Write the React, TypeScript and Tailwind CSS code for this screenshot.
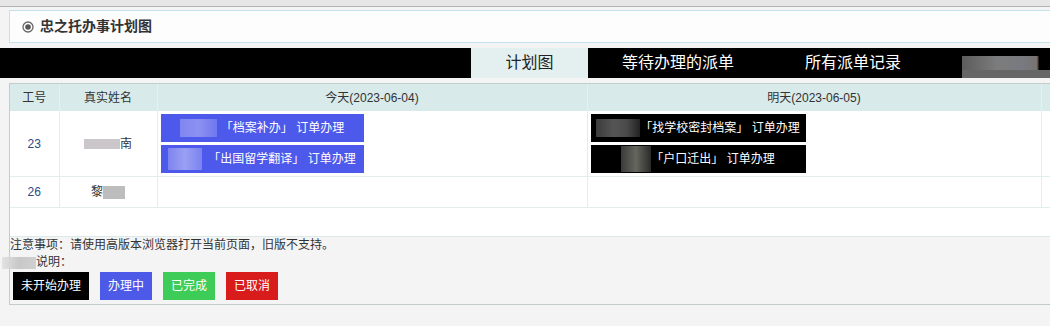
import React from 'react';

const FONT = '"Liberation Sans", "Noto Sans CJK SC", sans-serif';

function Blur({ className }: { className: string }) {
  return <span className={`inline-block align-middle ${className}`} />;
}

function TaskBox({ color, width, blur, children }: { color: string; width: string; blur: string; children: React.ReactNode }) {
  return (
    <div className={`${color} ${width} h-[28px] flex items-center justify-center text-white text-[12px] whitespace-nowrap`}>
      <Blur className={blur} />
      <span>{children}</span>
    </div>
  );
}

export default function App() {
  return (
    <div className="w-[1050px] h-[326px] bg-[#f4f4f4] overflow-hidden text-[#333]" style={{ fontFamily: FONT }}>
      {/* top strip */}
      <div className="h-[7px] bg-[#e6e6e6] border-b border-[#b4b4b4]" />

      {/* title */}
      <div className="mt-[3px] ml-[9px] h-[33px] bg-[#fdfdfd] border border-r-0 border-[#c3e2eb] flex items-center pl-[12px] gap-[6px]">
        <svg width="12" height="12" viewBox="0 0 12 12">
          <circle cx="6" cy="6" r="5" fill="none" stroke="#666" strokeWidth="1.3" />
          <circle cx="6" cy="6" r="2.8" fill="#555" />
        </svg>
        <span className="text-[14px] font-bold text-[#333]">忠之托办事计划图</span>
      </div>

      {/* nav */}
      <div className="mt-[5px] h-[30px] bg-black flex text-[16px]">
        <div className="w-[471px]" />
        <div className="w-[117px] bg-[#e4f0f0] text-[#222] flex items-center justify-center">计划图</div>
        <div className="w-[180px] text-white flex items-center justify-center">等待办理的派单</div>
        <div className="w-[170px] text-white flex items-center justify-center">所有派单记录</div>
        <div className="ml-[24px] flex-1 flex flex-col justify-end">
          <div className="h-[14px] bg-[linear-gradient(90deg,#5c5c5c,#7c7c7c_40%,#777a80_70%,#7a726e_85%,#000_88%)]" />
          <div className="h-[8px] bg-[#666]" />
        </div>
      </div>

      {/* main */}
      <div className="mt-[5px] ml-[9px] w-[1060px] border-l border-t border-b border-[#c3cccc]">
        <table className="table-fixed border-collapse text-[12px] bg-white" style={{ width: 1060 }}>
          <colgroup>
            <col style={{ width: 49 }} />
            <col style={{ width: 98 }} />
            <col style={{ width: 430 }} />
            <col style={{ width: 454 }} />
            <col />
          </colgroup>
          <thead>
            <tr className="h-[27px] bg-[#d8eaea] text-[#333]">
              <th className="font-normal border-r border-[#e6f2f2]">工号</th>
              <th className="font-normal border-r border-[#e6f2f2]">真实姓名</th>
              <th className="font-normal border-r border-[#e6f2f2]">今天(2023-06-04)</th>
              <th className="font-normal border-r border-[#e6f2f2]">明天(2023-06-05)</th>
              <th />
            </tr>
          </thead>
          <tbody>
            <tr className="border-b border-[#e0eeee]">
              <td className="text-center text-[#2a4a88] border-r border-[#e0eeee]">23</td>
              <td className="text-center border-r border-[#e0eeee]">
                <Blur className="w-[36px] h-[10px] bg-[#cbc6ca]" />南
              </td>
              <td className="px-[3px] py-[3px] border-r border-[#e0eeee] align-top">
                <div className="flex flex-col gap-[3px]">
                  <TaskBox color="bg-[#4d59ea]" width="w-[203px]" blur="w-[37px] h-[18px] mr-[4px] bg-[linear-gradient(90deg,#7f86f0,#8c91f2,#6f78ee)]">
                    「档案补办」 订单办理
                  </TaskBox>
                  <TaskBox color="bg-[#4d59ea]" width="w-[203px]" blur="w-[34px] h-[22px] mr-[6px] bg-[linear-gradient(90deg,#7d84ef,#9aa0f4,#7a82ef)]">
                    「出国留学翻译」 订单办理
                  </TaskBox>
                </div>
              </td>
              <td className="px-[3px] py-[3px] border-r border-[#e0eeee] align-top">
                <div className="flex flex-col gap-[3px]">
                  <TaskBox color="bg-black" width="w-[215px]" blur="w-[44px] h-[18px] bg-[linear-gradient(90deg,#3c3c3c,#555_40%,#4a4a4a_70%,#222)]">
                    「找学校密封档案」 订单办理
                  </TaskBox>
                  <TaskBox color="bg-black" width="w-[215px]" blur="w-[30px] h-[26px] bg-[linear-gradient(90deg,#3a3a3a,#66665e,#2a2a2a)]">
                    「户口迁出」 订单办理
                  </TaskBox>
                </div>
              </td>
              <td />
            </tr>
            <tr className="h-[31px] border-b border-[#e0eeee]">
              <td className="text-center text-[#2a4a88] border-r border-[#e0eeee]">26</td>
              <td className="text-center border-r border-[#e0eeee]">
                黎<Blur className="w-[22px] h-[13px] bg-[#bdbdbd]" />
              </td>
              <td className="border-r border-[#e0eeee]" />
              <td className="border-r border-[#e0eeee]" />
              <td />
            </tr>
          </tbody>
        </table>
        <div className="h-[29px] bg-white border-b border-[#dbe9e9]" />

        <div className="text-[12px] leading-[17px] text-[#333] pb-[4px]">
          <div>注意事项：请使用高版本浏览器打开当前页面，旧版不支持。</div>
          <div className="-ml-[8px] flex items-center">
            <Blur className="w-[34px] h-[12px] bg-[linear-gradient(90deg,#e2e2e2,#c8c8c8_50%,#d0d0d0)]" />
            <span>说明：</span>
          </div>
          <div className="flex gap-[11px] pl-[3px] mt-[1px]">
            <div className="h-[28px] px-[8px] flex items-center bg-black text-white">未开始办理</div>
            <div className="h-[28px] px-[8px] flex items-center bg-[#4d5ae8] text-white">办理中</div>
            <div className="h-[28px] px-[8px] flex items-center bg-[#3dcc57] text-white">已完成</div>
            <div className="h-[28px] px-[8px] flex items-center bg-[#d81c1c] text-white">已取消</div>
          </div>
        </div>
      </div>
    </div>
  );
}
